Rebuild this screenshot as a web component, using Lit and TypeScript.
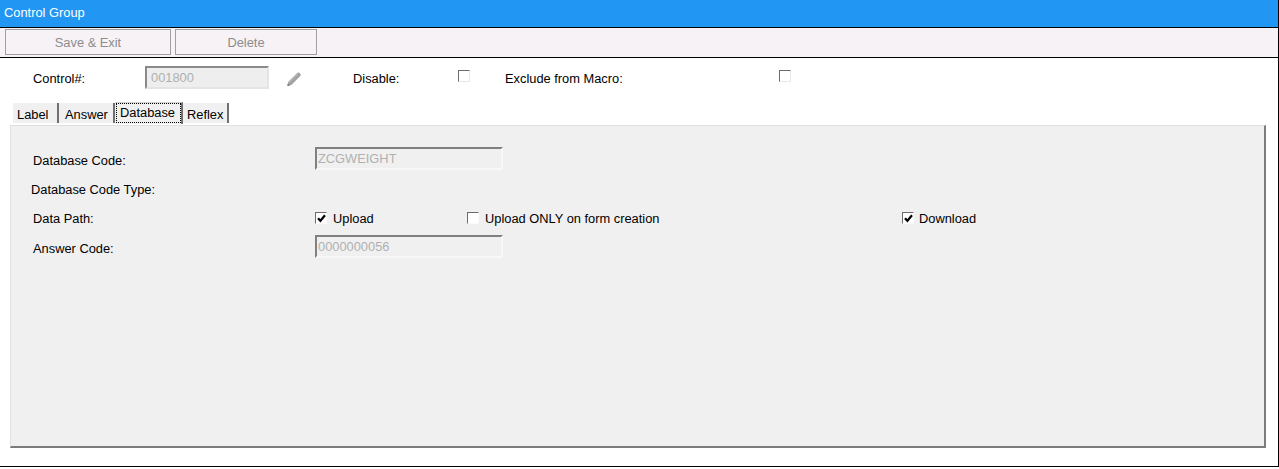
import { LitElement, html, css, svg } from "lit";
import { customElement } from "lit/decorators.js";

const check = svg`<svg class="tick" width="9" height="9" viewBox="0 0 9 9"><path d="M1 4.2 L3.4 6.8 L8 1.2" fill="none" stroke="#000" stroke-width="2.2"/></svg>`;

@customElement("app-root")
export class AppRoot extends LitElement {
  static styles = css`
    :host { display: block; width: 1279px; height: 469px; font: 12.85px "Liberation Sans", Arial, sans-serif; color: #000; background: #fff; overflow: hidden; }
    .frame { box-sizing: border-box; height: 467px; border-right: 1px solid #000; border-bottom: 1px solid #000; display: flex; flex-direction: column; }
    .title { height: 27px; box-sizing: border-box; background: #2196f3; color: #fff; padding: 5px 0 0 4px; line-height: 15px; flex: none; }
    .toolbar { flex: none; height: 31px; box-sizing: border-box; border-top: 1px solid #000; border-bottom: 1px solid #000; background: #f6f2f5; display: flex; gap: 4px; padding: 1px 0 0 5px; }
    .btn { box-sizing: border-box; height: 26px; border: 1px solid #a0a0a0; background: #f6f2f5; color: #8c8c8c; text-align: center; line-height: 25px; }
    .b1 { width: 166px; } .b2 { width: 142px; }
    .top { flex: none; height: 44px; box-sizing: border-box; display: flex; align-items: flex-start; padding-top: 8px; }
    .lbl { line-height: 24px; height: 22px; margin-top: 1px; white-space: nowrap; }
    .input { box-sizing: border-box; height: 23px; border: 2px solid; border-color: #808080 #f8f8f8 #f8f8f8 #808080; background: #f0f0f0; color: #b0b0b0; line-height: 20px; padding-left: 1px; }
    .top .input { width: 124px; background: #eee; border-color: #8a8a8a #e4e4e4 #e4e4e4 #8a8a8a; padding-left: 4px; }
    .box { box-sizing: border-box; width: 12px; height: 12px; flex: none; background: #fff; border: 1px solid; border-color: #6c6c6c #e8e8e8 #e8e8e8 #6c6c6c; display: flex; align-items: center; justify-content: center; }
    .panel .box { border-color: #6c6c6c #fafafa #fafafa #6c6c6c; }
    .tabs { flex: none; height: 22px; display: flex; padding-left: 13px; align-items: flex-start; box-sizing: border-box; }
    .tab { box-sizing: border-box; height: 20px; margin-top: 1px; background: #f0f0f0; border-right: 2px solid #707070; line-height: 23px; white-space: nowrap; }
    .t1 { width: 46px; padding-left: 4px; } .t2 { width: 56px; padding-left: 6px; }
    .t3 { width: 68px; height: 22px; margin-top: 0; border-top: 1px solid #d0d0d0; }
    .t3 span { display: block; margin: 0 0 0 1px; height: 20px; box-sizing: border-box; outline: 1px dotted #000; outline-offset: -1px; line-height: 20px; padding-left: 4px; }
    .t4 { width: 46px; padding-left: 4px; }
    .panel { margin: 1px 0 0 10px; width: 1256px; height: 323px; box-sizing: border-box; background: #f0f0f0; border-left: 1px solid #e0e0e0; border-top: 1px solid #e0e0e0; border-right: 2px solid #7c7c7c; border-bottom: 2px solid #7c7c7c; padding: 21px 0 0 22px; display: flex; flex-direction: column; }
    .row { display: flex; align-items: center; height: 22px; }
    .name { width: 282px; white-space: nowrap; line-height: 24px; padding-top: 2px; }
    .shift { margin-left: -2px; width: 284px; }
    .row .input { width: 188px; }
    .tall { height: 23px; }
    .tall .name { padding-top: 5px; }
    .r2 { margin-top: 8px; } .r3 { margin-top: 7px; } .r4 { margin-top: 6px; }
    .opt { display: flex; align-items: center; gap: 6px; white-space: nowrap; }
    .o1 { width: 152px; } .o2 { width: 435px; } .o3 { gap: 5px; }
    .pencil { display: block; margin: 5px 0 0 17px; }
    .m1 { margin-left: 33px; width: 112px; }
    .m2 { margin-left: 51px; width: 105px; }
    .m3 { margin-left: 35px; width: 274px; }
    .top .box { margin-top: 4px; }
  `;
  render() {
    return html`<div class="frame">
      <div class="title">Control Group</div>
      <div class="toolbar"><div class="btn b1">Save &amp; Exit</div><div class="btn b2">Delete</div></div>
      <div class="top">
        <div class="lbl m1">Control#:</div>
        <div class="input">001800</div>
        <svg class="pencil" width="16" height="16" viewBox="0 0 16 16"><path d="M1.3 15 L2.3 10.8 L11.2 1.9 Q12.2 1 13.3 1.7 L14.5 2.9 Q15.2 4 14.3 5 L5.4 13.9 Z" fill="#a2a2a2"/><path d="M3 11.5 L11.8 2.7" stroke="#c4c4c4" stroke-width="1" fill="none"/><path d="M1.3 15 L1.9 12.4 L3.9 14.4 Z" fill="#777"/></svg>
        <div class="lbl m2">Disable:</div>
        <div class="box"></div>
        <div class="lbl m3">Exclude from Macro:</div>
        <div class="box"></div>
      </div>
      <div class="tabs">
        <div class="tab t1">Label</div><div class="tab t2">Answer</div><div class="tab t3"><span>Database</span></div><div class="tab t4">Reflex</div>
      </div>
      <div class="panel">
        <div class="row tall"><div class="name">Database Code:</div><div class="input">ZCGWEIGHT</div></div>
        <div class="row r2"><div class="name shift">Database Code Type:</div></div>
        <div class="row r3"><div class="name">Data Path:</div>
          <div class="opt o1"><span class="box">${check}</span>Upload</div>
          <div class="opt o2"><span class="box"></span>Upload ONLY on form creation</div>
          <div class="opt o3"><span class="box">${check}</span>Download</div>
        </div>
        <div class="row tall r4"><div class="name">Answer Code:</div><div class="input">0000000056</div></div>
      </div>
    </div>`;
  }
}
